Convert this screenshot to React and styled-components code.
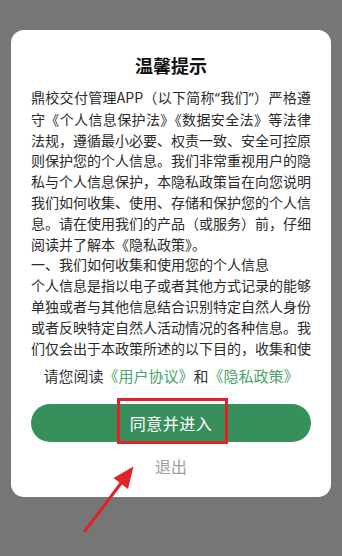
import React from "react";
import styled, { createGlobalStyle } from "styled-components";

const Global = createGlobalStyle`
  html, body { margin: 0; padding: 0; background: #767676; }
  body { font-family: "Noto Sans CJK SC", "Noto Sans", sans-serif; }
  * { box-sizing: border-box; }
`;

const Screen = styled.div`
  position: relative;
  width: 342px;
  height: 556px;
  background: #767676;
  padding: 30px 11px 0;
  overflow: hidden;
`;

const Card = styled.div`
  width: 320px;
  height: 467px;
  background: #ffffff;
  border-radius: 13px;
  padding: 22px 20px 0;
  display: flex;
  flex-direction: column;
  align-items: stretch;
`;

const Title = styled.h2`
  margin: 0;
  text-align: center;
  font-size: 18px;
  line-height: 26px;
  font-weight: 700;
  color: #111;
`;

const Body = styled.div`
  margin-top: 9px;
  height: 271px;
  overflow: hidden;
  font-size: 14px;
  line-height: 20.8px;
  color: #2b2b2b;
  text-align: justify;
`;

const Para = styled.p`
  margin: 0;
`;

const Quote = styled.span`
  font-family: "Noto Sans", "DejaVu Sans", sans-serif;
`;

const Agree = styled.div`
  margin-top: 8px;
  text-align: center;
  font-size: 15px;
  line-height: 20px;
  color: #333;
`;

const Link = styled.span`
  color: #4aa468;
`;

const ButtonWrap = styled.div`
  position: relative;
  margin-top: 18px;
`;

const Primary = styled.button`
  display: block;
  width: 100%;
  height: 38px;
  border: none;
  border-radius: 19px;
  background: #378f5b;
  color: #fff;
  font-family: inherit;
  font-size: 16px;
  letter-spacing: 0.5px;
`;

const Highlight = styled.div`
  position: absolute;
  left: 86px;
  top: -6px;
  width: 111px;
  height: 46px;
  border: 3px solid #e0222a;
  pointer-events: none;
`;

const Exit = styled.div`
  margin-top: 13px;
  text-align: center;
  font-size: 16px;
  line-height: 22px;
  color: #9e9e9e;
`;

const Arrow = styled.svg`
  position: absolute;
  left: 0;
  top: 0;
  pointer-events: none;
`;

export default function App() {
  return (
    <>
      <Global />
      <Screen>
        <Card>
          <Title>温馨提示</Title>
          <Body>
            <Para>
              鼎校交付管理APP（以下简称<Quote>“</Quote>我们<Quote>”</Quote>）严格遵守《个人信息保护法》《数据安全法》等法律法规，遵循最小必要、权责一致、安全可控原则保护您的个人信息。我们非常重视用户的隐私与个人信息保护，本隐私政策旨在向您说明我们如何收集、使用、存储和保护您的个人信息。请在使用我们的产品（或服务）前，仔细阅读并了解本《隐私政策》。
            </Para>
            <Para>一、我们如何收集和使用您的个人信息</Para>
            <Para>
              个人信息是指以电子或者其他方式记录的能够单独或者与其他信息结合识别特定自然人身份或者反映特定自然人活动情况的各种信息。我们仅会出于本政策所述的以下目的，收集和使用您的个人信息。
            </Para>
          </Body>
          <Agree>
            请您阅读<Link>《用户协议》</Link>和<Link>《隐私政策》</Link>
          </Agree>
          <ButtonWrap>
            <Primary>同意并进入</Primary>
            <Highlight />
          </ButtonWrap>
          <Exit>退出</Exit>
        </Card>
        <Arrow width="342" height="556" viewBox="0 0 342 556">
          <line x1="85" y1="531" x2="121.5" y2="482.5" stroke="#e0222a" strokeWidth="3" strokeLinecap="round" />
          <polygon points="133.5,466.5 113.5,478 128,489" fill="#e0222a" />
        </Arrow>
      </Screen>
    </>
  );
}
